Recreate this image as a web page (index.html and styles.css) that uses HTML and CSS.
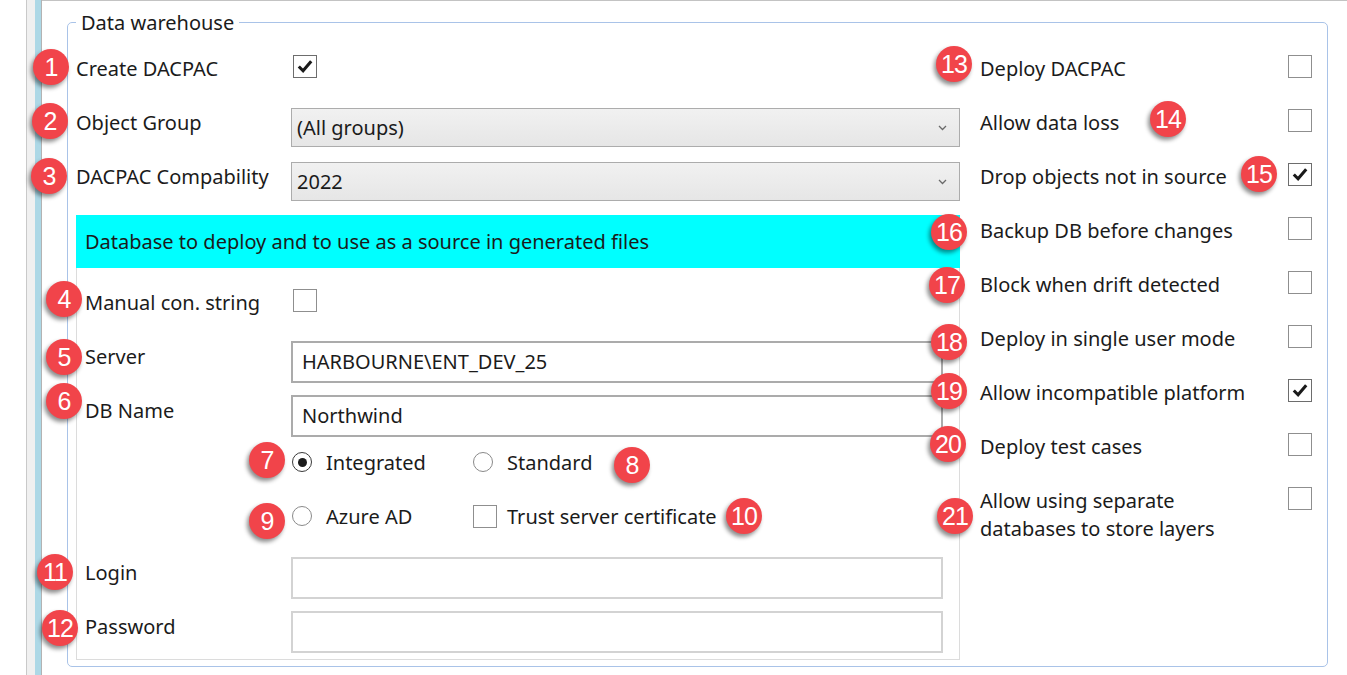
FILE: index.html
```html
<!DOCTYPE html>
<html lang="en">
<head>
  <meta charset="UTF-8" />
  <title>Data warehouse</title>
  <link rel="stylesheet" href="styles.css">
</head>
<body>
  <div class="page">
    <div class="rail"></div>
    <main class="main">
      <fieldset class="group">
        <legend>Data warehouse</legend>
        <div class="cols">

          <div class="left">
            <div class="row">
              <span class="lbl">Create DACPAC</span>
              <span class="check on"><svg viewBox="0 0 22 22"><path d="M4.5 11 L9 15.5 L17.5 5.5" /></svg></span>
            </div>
            <div class="row">
              <span class="lbl">Object Group</span>
              <div class="select"><span>(All groups)</span><svg viewBox="0 0 9 6"><path d="M1 1 L4.5 4.5 L8 1" /></svg></div>
            </div>
            <div class="row">
              <span class="lbl">DACPAC Compability</span>
              <div class="select"><span>2022</span><svg viewBox="0 0 9 6"><path d="M1 1 L4.5 4.5 L8 1" /></svg></div>
            </div>

            <div class="panel">
              <div class="panel-head">Database to deploy and to use as a source in generated files</div>
              <div class="panel-body">
                <div class="row">
                  <span class="lbl">Manual con. string</span>
                  <span class="check"></span>
                </div>
                <div class="row">
                  <span class="lbl">Server</span>
                  <div class="text">HARBOURNE\ENT_DEV_25</div>
                </div>
                <div class="row">
                  <span class="lbl">DB Name</span>
                  <div class="text">Northwind</div>
                </div>
                <div class="row">
                  <span class="lbl"></span>
                  <div class="opts">
                    <label class="opt"><span class="radio on"></span>Integrated</label>
                    <label class="opt"><span class="radio"></span>Standard</label>
                  </div>
                </div>
                <div class="row">
                  <span class="lbl"></span>
                  <div class="opts">
                    <label class="opt"><span class="radio"></span>Azure AD</label>
                    <label class="opt box"><span class="check"></span>Trust server certificate</label>
                  </div>
                </div>
                <div class="row">
                  <span class="lbl">Login</span>
                  <div class="text off"></div>
                </div>
                <div class="row">
                  <span class="lbl">Password</span>
                  <div class="text off"></div>
                </div>
              </div>
            </div>
          </div>

          <div class="right">
            <div class="row"><span class="lbl">Deploy DACPAC</span><span class="check"></span></div>
            <div class="row"><span class="lbl">Allow data loss</span><span class="check"></span></div>
            <div class="row"><span class="lbl">Drop objects not in source</span><span class="check on"><svg viewBox="0 0 22 22"><path d="M4.5 11 L9 15.5 L17.5 5.5" /></svg></span></div>
            <div class="row"><span class="lbl">Backup DB before changes</span><span class="check"></span></div>
            <div class="row"><span class="lbl">Block when drift detected</span><span class="check"></span></div>
            <div class="row"><span class="lbl">Deploy in single user mode</span><span class="check"></span></div>
            <div class="row"><span class="lbl">Allow incompatible platform</span><span class="check on"><svg viewBox="0 0 22 22"><path d="M4.5 11 L9 15.5 L17.5 5.5" /></svg></span></div>
            <div class="row"><span class="lbl">Deploy test cases</span><span class="check"></span></div>
            <div class="row"><span class="lbl two">Allow using separate<br>databases to store layers</span><span class="check"></span></div>
          </div>

        </div>
      </fieldset>
    </main>

    <!-- numbered callouts drawn over the form -->
    <div class="badges">
      <span class="badge n1">1</span>
      <span class="badge n2">2</span>
      <span class="badge n3">3</span>
      <span class="badge n4">4</span>
      <span class="badge n5">5</span>
      <span class="badge n6">6</span>
      <span class="badge n7">7</span>
      <span class="badge n8">8</span>
      <span class="badge n9">9</span>
      <span class="badge n10">10</span>
      <span class="badge n11">11</span>
      <span class="badge n12">12</span>
      <span class="badge n13">13</span>
      <span class="badge n14">14</span>
      <span class="badge n15">15</span>
      <span class="badge n16">16</span>
      <span class="badge n17">17</span>
      <span class="badge n18">18</span>
      <span class="badge n19">19</span>
      <span class="badge n20">20</span>
      <span class="badge n21">21</span>
    </div>
  </div>
</body>
</html>
```

FILE: styles.css
```css
body {
  margin: 0;
  font-family: 'Noto Sans', 'Open Sans', sans-serif;
  font-size: 20px;
  color: #1b1b1b;
  background: #fff;
}
.page {
  position: relative;
  display: flex;
  min-height: 100vh;
}
.rail {
  margin-left: 26px;
  width: 14px;
  border-left: 1px solid #c9c9c9;
  border-right: 1px solid #b3b3b3;
  background: linear-gradient(to right, #f0f0f0 8px, #add8e6 8px);
}
.main {
  flex: 1;
  border-top: 1px solid #c3c3c3;
  padding: 8px 19px 0 25px;
}
.group {
  margin: 0;
  border: 1px solid #a9c3e8;
  border-radius: 5px;
  padding: 11px 15px 6px 8px;
}
.group legend {
  padding: 0 5px;
  line-height: 27px;
}
.cols {
  display: flex;
  gap: 20px;
}
.left {
  width: 884px;
}
.right {
  width: 332px;
}
.row {
  display: flex;
  align-items: flex-start;
  height: 54px;
}
.lbl {
  width: 215px;
  flex-shrink: 0;
  margin-top: 8px;
  line-height: 27px;
  white-space: nowrap;
}
.lbl.two {
  line-height: 28px;
}
.right .row {
  justify-content: space-between;
}
.right .lbl {
  width: auto;
}

/* checkbox */
.check {
  box-sizing: border-box;
  width: 24px;
  height: 23px;
  margin-top: 8px;
  border: 1px solid #8f8f8f;
  background: #fff;
  flex-shrink: 0;
}
.left .row > .check {
  margin-left: 2px;
}
.check.on {
  border-color: #6d6d6d;
}
.check svg {
  display: block;
  width: 22px;
  height: 21px;
}
.check path {
  fill: none;
  stroke: #1a1a1a;
  stroke-width: 3.2;
}

/* combo box */
.select {
  flex: 1;
  box-sizing: border-box;
  height: 39px;
  margin-top: 7px;
  border: 1px solid #acacac;
  background: linear-gradient(#f1f1f1, #e6e6e6);
  display: flex;
  align-items: center;
  justify-content: space-between;
  padding: 0 12px 0 5px;
}
.select svg {
  width: 9px;
  height: 6px;
}
.select path {
  fill: none;
  stroke: #6a6a6a;
  stroke-width: 1.3;
}

/* inner panel */
.panel {
  margin-top: 6px;
  border: 1px solid #dcdcdc;
}
.panel-head {
  margin: -1px -1px 0;
  height: 53px;
  line-height: 53px;
  padding-left: 9px;
  background: #00ffff;
}
.panel-body {
  padding: 13px 16px 0 8px;
}
.panel .lbl {
  width: 206px;
}
.text {
  flex: 1;
  box-sizing: border-box;
  height: 42px;
  margin-top: 6px;
  border: 2px solid #ababab;
  padding-left: 9px;
  line-height: 38px;
}
.text.off {
  border-color: #d3d3d3;
}

/* radio / option rows */
.opts {
  display: flex;
  height: 38px;
}
.opt {
  display: flex;
  align-items: center;
  gap: 14px;
  width: 181px;
  white-space: nowrap;
}
.opt:first-child {
  margin-left: 1px;
}
.opt.box {
  gap: 10px;
}
.opt .check {
  margin-top: 0;
}
.radio {
  box-sizing: border-box;
  width: 20px;
  height: 20px;
  border: 1px solid #8a8a8a;
  border-radius: 50%;
  display: flex;
  align-items: center;
  justify-content: center;
}
.radio.on {
  border-color: #3a3a3a;
}
.radio.on::after {
  content: "";
  width: 9px;
  height: 9px;
  border-radius: 50%;
  background: #1b1b1b;
}

/* callouts */
.badge {
  position: absolute;
  width: 36px;
  height: 36px;
  border-radius: 50%;
  background: #f1444a;
  color: #fff;
  font-family: 'Liberation Sans', Arial, sans-serif;
  font-size: 25px;
  line-height: 36px;
  text-align: center;
  letter-spacing: -1px;
  box-shadow: -2px 3px 4px rgba(0, 0, 0, 0.45);
}
.n1 { left: 33px; top: 49px; }
.n2 { left: 32px; top: 103px; }
.n3 { left: 31px; top: 158px; }
.n4 { left: 46px; top: 281px; }
.n5 { left: 46px; top: 339px; }
.n6 { left: 46px; top: 383px; }
.n7 { left: 249px; top: 442px; }
.n8 { left: 614px; top: 447px; }
.n9 { left: 249px; top: 503px; }
.n10 { left: 726px; top: 498px; }
.n11 { left: 37px; top: 554px; }
.n12 { left: 42px; top: 610px; }
.n13 { left: 936px; top: 46px; }
.n14 { left: 1150px; top: 101px; }
.n15 { left: 1241px; top: 156px; }
.n16 { left: 931px; top: 214px; }
.n17 { left: 929px; top: 267px; }
.n18 { left: 931px; top: 324px; }
.n19 { left: 931px; top: 373px; }
.n20 { left: 930px; top: 426px; }
.n21 { left: 937px; top: 498px; }
```
